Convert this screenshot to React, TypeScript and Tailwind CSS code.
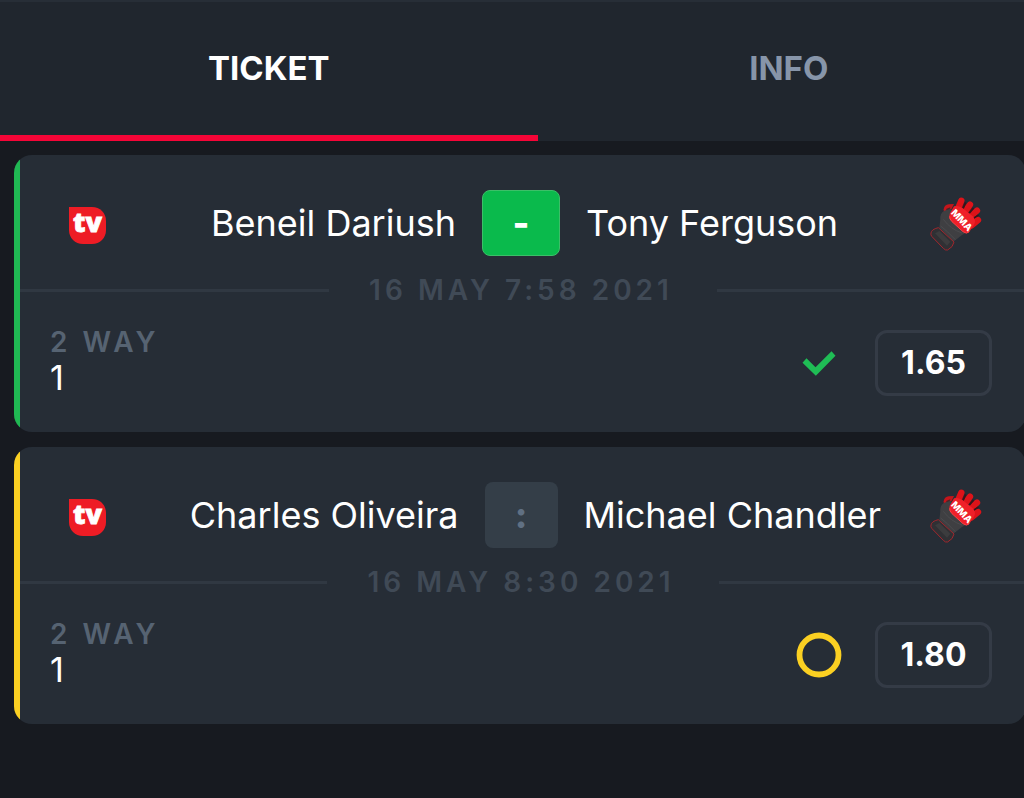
import React, { useState } from 'react';
import clsx from 'clsx';

type BetStatus = 'won' | 'pending';

interface Bet {
  id: number;
  home: string;
  away: string;
  score: string;
  date: string;
  market: string;
  pick: string;
  odds: string;
  status: BetStatus;
}

const bets: Bet[] = [
  {
    id: 1,
    home: 'Beneil Dariush',
    away: 'Tony Ferguson',
    score: '-',
    date: '16 MAY 7:58 2021',
    market: '2 WAY',
    pick: '1',
    odds: '1.65',
    status: 'won',
  },
  {
    id: 2,
    home: 'Charles Oliveira',
    away: 'Michael Chandler',
    score: ':',
    date: '16 MAY 8:30 2021',
    market: '2 WAY',
    pick: '1',
    odds: '1.80',
    status: 'pending',
  },
];

const TvLogo: React.FC = () => (
  <svg width="37" height="37" viewBox="0 0 37 37" className="overflow-visible" aria-hidden="true">
    <path d="M0 0H23C31 0 37 6 37 14V23C37 31 31 37 23 37H14C6 37 0 31 0 23Z" fill="#ee1c25" />
    <text
      x="18.5"
      y="25"
      textAnchor="middle"
      fontFamily="'Open Sans', sans-serif"
      fontWeight="800"
      fontSize="27"
      fill="#fff"
      stroke="#fff"
      strokeWidth="0.8"
    >
      tv
    </text>
  </svg>
);

const GloveIcon: React.FC = () => (
  <svg width="52" height="55" viewBox="88 46 156 165" className="overflow-visible" aria-hidden="true">
    {/* thumb */}
    <path d="M129 86Q131 72 144 71L160 70L146 98L130 98Z" fill="#c4151b" />
    <path d="M136 85L149 80L143 98Z" fill="#4a2226" />
    {/* palm and wrist */}
    <path d="M131 90Q117 98 119 116L116 141L158 183L184 163L196 156L150 84Z" fill="#3f3f42" />
    <path d="M120 136Q140 151 164 177M128 116Q150 146 184 157" fill="none" stroke="#4b4b4e" strokeWidth="3" />
    {/* fingers */}
    <path d="M164 84L182 66L208 78L226 94L232 118L214 140Z" fill="#5a151b" />
    <path d="M171 86L182 60M191 96L208 72M206 111L229 90" fill="none" stroke="#dd1319" strokeWidth="19" strokeLinecap="round" />
    <path d="M213 134L232 118" fill="none" stroke="#dd1319" strokeWidth="19" strokeLinecap="round" />
    <path d="M194 67L188 82M217 84L207 96M232 104L221 111" fill="none" stroke="#35161c" strokeWidth="5" strokeLinecap="round" />
    {/* label plate */}
    <path d="M160 77Q175 73 192 87L216 107Q228 119 219 134L206 153Q200 161 188 153L153 122Q142 112 148 98Z" fill="#ef2028" />
    <path d="M147 107Q146 115 154 123L187 153Q198 162 206 153" fill="none" stroke="#ff4046" strokeWidth="3" />
    <text
      x="184"
      y="129"
      textAnchor="middle"
      transform="rotate(46 184 118)"
      fontFamily="Inter, sans-serif"
      fontWeight="800"
      fontSize="29"
      fill="#fff"
    >
      MMA
    </text>
    {/* strap */}
    <path d="M91 157Q92 146 113 141L160 184Q158 199 141 208Q134 210 128 203L94 168Q89 163 91 157Z" fill="#303034" stroke="#a0262d" strokeWidth="3" />
    <path d="M103 158L116 151L149 183L139 195Z" fill="#3c3c3e" />
  </svg>
);

const CheckIcon: React.FC = () => (
  <svg width="34" height="25" viewBox="68 125 101 75" role="img" aria-label="Won">
    <path d="M69 160L81 147L108 174L156 126L168 139L109 199Z" fill="#1fbd55" />
  </svg>
);

const PendingIcon: React.FC = () => (
  <svg width="46" height="46" viewBox="0 0 46 46" role="img" aria-label="Pending">
    <circle cx="23" cy="23" r="19.5" fill="none" stroke="#fbd022" strokeWidth="5.8" />
  </svg>
);

const BetCard: React.FC<{ bet: Bet }> = ({ bet }) => {
  const won = bet.status === 'won';

  return (
    <article className="flex overflow-hidden rounded-[18px] bg-[#262d36]">
      <div className={clsx('w-1.5 shrink-0', won ? 'bg-[#20b853]' : 'bg-[#fbd022]')} />
      <div className="min-w-0 flex-1">
        <div className="flex items-center pt-[35px] pr-11 pl-12">
          <div className="flex w-14 shrink-0 pt-1 pl-px">
            <TvLogo />
          </div>
          <div className="grid flex-1 grid-cols-[1fr_auto_1fr] items-center gap-[26px] text-[36px] leading-[66px] whitespace-nowrap text-white">
            <span className="text-right">{bet.home}</span>
            <span
              className={clsx(
                'flex h-[66px] items-center justify-center rounded-lg text-[36px] font-extrabold',
                won ? 'w-[78px] border border-[#3cbf68] bg-[#0aba4c]' : 'w-[73px] bg-[#343e48] text-[#607083]'
              )}
            >
              {bet.score}
            </span>
            <span>{bet.away}</span>
          </div>
          <div className="flex w-16 shrink-0 justify-end">
            <GloveIcon />
          </div>
        </div>

        <div className="mt-4 flex items-center">
          <div className="h-[3px] flex-1 bg-[#303842]" />
          <time className="pr-11 pl-10 text-[28px] leading-9 font-semibold tracking-[4px] text-[#404a56]">{bet.date}</time>
          <div className="h-[3px] flex-1 bg-[#303842]" />
        </div>

        <div className="mt-4 flex items-end pr-[34px] pb-9 pl-[30px]">
          <div className="flex-1 leading-9">
            <p className="text-[28px] leading-9 font-semibold tracking-[4px] text-[#566372]">{bet.market}</p>
            <p className="text-[34px] leading-9 text-white">{bet.pick}</p>
          </div>
          <div className="mr-8 flex h-[66px] w-12 items-center justify-center">{won ? <CheckIcon /> : <PendingIcon />}</div>
          <div className="flex h-[66px] w-[117px] items-center justify-center rounded-xl border-[3px] border-[#343b46] text-[32px] font-bold text-white">
            {bet.odds}
          </div>
        </div>
      </div>
    </article>
  );
};

const App: React.FC = () => {
  const [tab, setTab] = useState<'ticket' | 'info'>('ticket');

  const tabClass = (active: boolean) =>
    clsx(
      'cursor-pointer border-b-[6px] pt-[46px] pb-[47px] text-[33px] leading-10 font-bold',
      active ? 'border-[#f50537] text-white' : 'border-transparent text-[#8795a9]'
    );

  return (
    <div className="min-h-screen overflow-x-hidden bg-[#171a20] font-['Inter',sans-serif]">
      <nav className="flex border-t-2 border-[#272e37] bg-[#20262e]" role="tablist">
        <button role="tab" aria-selected={tab === 'ticket'} onClick={() => setTab('ticket')} className={clsx('w-[52.5%]', tabClass(tab === 'ticket'))}>
          TICKET
        </button>
        <button role="tab" aria-selected={tab === 'info'} onClick={() => setTab('info')} className={clsx('flex-1 pl-4', tabClass(tab === 'info'))}>
          INFO
        </button>
      </nav>
      <main className="-mr-0.5 space-y-[15px] pt-3.5 pb-14 pl-3.5">
        {bets.map(bet => (
          <BetCard key={bet.id} bet={bet} />
        ))}
      </main>
    </div>
  );
};

export default App;
